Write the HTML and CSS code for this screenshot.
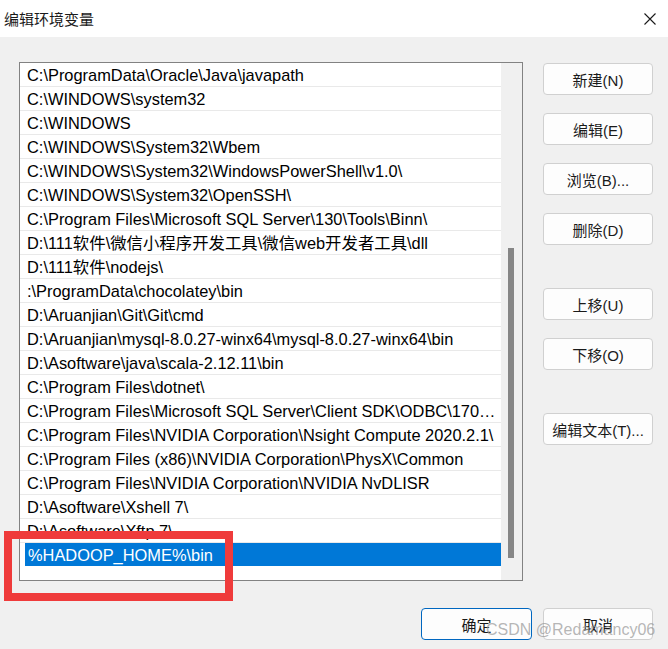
FILE: index.html
```html
<!DOCTYPE html>
<html lang="zh-CN">

<head>
    <meta charset="UTF-8">
    <meta name="viewport" content="width=device-width, initial-scale=1.0">
    <title>编辑环境变量</title>
    <link rel="stylesheet" href="styles.css">
</head>

<body>
    <div class="dialog">
        <div class="titlebar">
            <span class="title">编辑环境变量</span>
            <svg class="close" width="12" height="12" viewBox="0 0 12 12">
                <path d="M0.5 0.5 L11.5 11.5 M11.5 0.5 L0.5 11.5" stroke="#1a1a1a" stroke-width="1.1" fill="none" />
            </svg>
        </div>

        <div class="content">
            <div class="listbox">
                <div class="items">
                    <div class="item">C:\ProgramData\Oracle\Java\javapath</div>
                    <div class="item">C:\WINDOWS\system32</div>
                    <div class="item">C:\WINDOWS</div>
                    <div class="item">C:\WINDOWS\System32\Wbem</div>
                    <div class="item">C:\WINDOWS\System32\WindowsPowerShell\v1.0\</div>
                    <div class="item">C:\WINDOWS\System32\OpenSSH\</div>
                    <div class="item">C:\Program Files\Microsoft SQL Server\130\Tools\Binn\</div>
                    <div class="item">D:\111软件\微信小程序开发工具\微信web开发者工具\dll</div>
                    <div class="item">D:\111软件\nodejs\</div>
                    <div class="item">:\ProgramData\chocolatey\bin</div>
                    <div class="item">D:\Aruanjian\Git\Git\cmd</div>
                    <div class="item">D:\Aruanjian\mysql-8.0.27-winx64\mysql-8.0.27-winx64\bin</div>
                    <div class="item">D:\Asoftware\java\scala-2.12.11\bin</div>
                    <div class="item">C:\Program Files\dotnet\</div>
                    <div class="item">C:\Program Files\Microsoft SQL Server\Client SDK\ODBC\170\Tools\Binn\</div>
                    <div class="item">C:\Program Files\NVIDIA Corporation\Nsight Compute 2020.2.1\</div>
                    <div class="item">C:\Program Files (x86)\NVIDIA Corporation\PhysX\Common</div>
                    <div class="item">C:\Program Files\NVIDIA Corporation\NVIDIA NvDLISR</div>
                    <div class="item">D:\Asoftware\Xshell 7\</div>
                    <div class="item">D:\Asoftware\Xftp 7\</div>
                    <div class="item selected">%HADOOP_HOME%\bin</div>
                </div>
                <div class="scrollbar">
                    <div class="thumb"></div>
                </div>
            </div>

            <div class="side-buttons">
                <button class="btn">新建(N)</button>
                <button class="btn">编辑(E)</button>
                <button class="btn">浏览(B)...</button>
                <button class="btn">删除(D)</button>
                <button class="btn group-start">上移(U)</button>
                <button class="btn">下移(O)</button>
                <button class="btn group-start">编辑文本(T)...</button>
            </div>
        </div>

        <div class="footer">
            <button class="btn primary">确定</button>
            <button class="btn">取消</button>
        </div>

        <!-- annotation drawn over the screenshot -->
        <div class="highlight-box"></div>
        <div class="watermark">CSDN @Redamancy06</div>
    </div>
</body>

</html>
```

FILE: styles.css
```css
* {
    box-sizing: border-box;
}

body {
    margin: 0;
    background-color: #f0f0f0;
    font-family: "Liberation Sans", "Noto Sans CJK SC", sans-serif;
    color: #000;
}

.dialog {
    position: relative;
    width: 668px;
    height: 649px;
    overflow: hidden;
}

.titlebar {
    height: 37px;
    background-color: #fff;
    display: flex;
    align-items: center;
    justify-content: space-between;
    padding: 0 12px 0 4px;
}

.title {
    font-family: "Noto Sans CJK SC", sans-serif;
    font-size: 15px;
    color: #1a1a1a;
}

.content {
    display: flex;
    padding: 25px 0 0 19px;
}

.listbox {
    width: 504px;
    height: 519px;
    border: 1px solid #828282;
    background-color: #fff;
    display: flex;
}

.items {
    width: 481px;
    overflow: hidden;
}

.item {
    height: 24px;
    line-height: 23px;
    font-size: 16.4px;
    padding: 1px 3px 0 7px;
    border-bottom: 1px solid #e9e9e9;
    white-space: nowrap;
    overflow: hidden;
    text-overflow: ellipsis;
}

.item.selected {
    margin-left: 5px;
    padding-left: 3px;
    background-color: #0078d7;
    color: #fff;
    border-bottom-color: #fff;
}

.scrollbar {
    width: 21px;
    background-color: #f0f0f0;
    padding: 185px 0 0 7px;
}

.thumb {
    width: 6px;
    height: 310px;
    background-color: #868686;
}

.side-buttons {
    display: flex;
    flex-direction: column;
    gap: 18px;
    margin-left: 20px;
    padding-top: 1px;
}

.btn {
    width: 110px;
    height: 32px;
    background-color: #fdfdfd;
    border: 1px solid #d0d0d0;
    border-radius: 4px;
    font-family: "Liberation Sans", "Noto Sans CJK SC", sans-serif;
    font-size: 15px;
    color: #1a1a1a;
    padding: 0;
}

.btn.group-start {
    margin-top: 25px;
}

.footer {
    display: flex;
    justify-content: flex-end;
    gap: 11px;
    padding: 27px 15px 0 0;
}

.btn.primary {
    width: 111px;
    border-color: #0067c0;
}

.highlight-box {
    position: absolute;
    left: 4px;
    top: 531px;
    width: 229px;
    height: 70px;
    border: 8px solid #ef3b3b;
}

.watermark {
    position: absolute;
    left: 486px;
    top: 621px;
    font-size: 16px;
    color: rgba(150, 150, 150, 0.7);
    white-space: nowrap;
}
```
